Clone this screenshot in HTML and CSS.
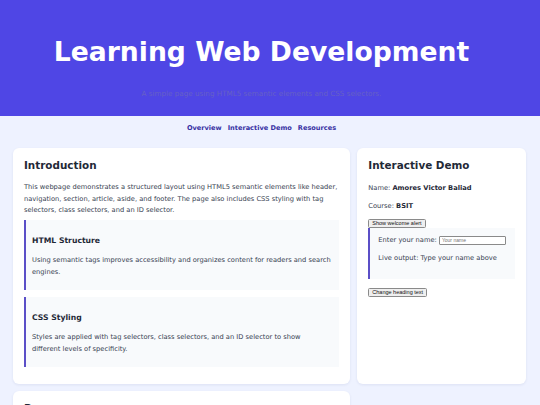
FILE: index.html
```html
<!DOCTYPE html>
<html lang="en">
<head>
<meta charset="utf-8">
<title>Learning Web Development</title>
<link rel="stylesheet" href="styles.css">
</head>
<body>
<header class="site-header">
  <h1 id="main-title">Learning Web Development</h1>
  <p class="tagline">A simple page using HTML5 semantic elements and CSS selectors.</p>
</header>
<nav class="site-nav">
  <a href="#overview">Overview</a>
  <a href="#demo">Interactive Demo</a>
  <a href="#resources">Resources</a>
</nav>
<main class="layout">
  <section class="card" id="overview">
    <h2>Introduction</h2>
    <p>This webpage demonstrates a structured layout using HTML5 semantic elements like header, navigation, section, article, aside, and footer. The page also includes CSS styling with tag selectors, class selectors, and an ID selector.</p>
    <article class="topic">
      <h3>HTML Structure</h3>
      <p>Using semantic tags improves accessibility and organizes content for readers and search engines.</p>
    </article>
    <article class="topic topic-narrow">
      <h3>CSS Styling</h3>
      <p>Styles are applied with tag selectors, class selectors, and an ID selector to show different levels of specificity.</p>
    </article>
  </section>
  <aside class="card" id="demo">
    <h2>Interactive Demo</h2>
    <p class="info">Name: <strong>Amores Victor Baliad</strong></p>
    <p class="info">Course: <strong>BSIT</strong></p>
    <button class="btn" type="button">Show welcome alert</button>
    <div class="demo-box">
      <label class="field">Enter your name: <input type="text" placeholder="Your name"></label>
      <p class="output">Live output: Type your name above</p>
    </div>
    <button class="btn" type="button">Change heading text</button>
  </aside>
  <section class="card" id="resources">
    <h2>Resources</h2>
  </section>
</main>
</body>
</html>
```
FILE: styles.css
```css
* { box-sizing: border-box; }
html, body { margin: 0; padding: 0; }
body {
  font-family: "DejaVu Sans", Verdana, sans-serif;
  font-size: 6.7px;
  line-height: 11.5px;
  color: #374151;
  background: #eef2ff;
}
.site-header {
  background: #4f46e5;
  color: #ffffff;
  text-align: center;
  height: 116px;
  padding: 35px 17px 0 0;
}
.site-header h1 {
  margin: 0;
  font-size: 26.6px;
  line-height: 34px;
  font-weight: bold;
}
.tagline {
  margin: 20px 0 0;
  font-size: 7.2px;
  line-height: 10px;
  color: #6660c6;
}
.site-nav {
  display: flex;
  justify-content: center;
  gap: 6px;
  padding: 7px 17px 6px 0;
}
.site-nav a {
  color: #3730a3;
  font-weight: bold;
  font-size: 6.6px;
  line-height: 11px;
  text-decoration: none;
}
.layout {
  display: grid;
  grid-template-columns: 2fr 1fr;
  gap: 7px;
  padding: 8px 14px 0 13px;
}
.card {
  background: #ffffff;
  border-radius: 6px;
  padding: 9.5px 11px 17px;
  box-shadow: 0 1px 3px rgba(30, 41, 99, 0.08);
}
.card h2 {
  margin: 0 0 9.7px;
  font-size: 10.4px;
  line-height: 15px;
  color: #1f2937;
}
#demo h2 { margin-bottom: 10.7px; }
.card p { margin: 0; }
#overview > p { margin-bottom: 3.5px; }
.topic {
  background: #f8fafc;
  border-left: 2px solid #5b4fc7;
  padding: 15px 6px 12px;
  margin-bottom: 7px;
}
.topic:last-child { margin-bottom: 0; }
.topic h3 {
  margin: 0 0 8px;
  font-size: 7.7px;
  line-height: 12px;
  color: #1f2937;
}
.topic-narrow p { padding-right: 22px; }
.info strong { color: #1f2937; }
#demo .info { margin-bottom: 6.5px; }
#demo .info + .info { margin-bottom: 6.2px; }
.btn {
  font-family: "Liberation Sans", Arial, sans-serif;
  font-size: 5.5px;
  line-height: 7px;
  height: 9px;
  padding: 0 3px;
  border: 1px solid #8a8a8a;
  border-radius: 1.5px;
  background: #efefef;
  color: #111;
  display: block;
}
.demo-box {
  background: #f8fafc;
  border-left: 2px solid #5b4fc7;
  padding: 7px 8px 14px;
  margin: 0 0 9px;
}
.field { display: block; margin-bottom: 7px; }
.field input {
  width: 67px;
  height: 9px;
  font-family: "Liberation Sans", Arial, sans-serif;
  font-size: 5px;
  padding: 0 2px;
  border: 1px solid #8a8a8a;
  border-radius: 1px;
  vertical-align: middle;
  margin: 0;
}
.output { margin: 0; }
#resources { min-height: 40px; }
```
